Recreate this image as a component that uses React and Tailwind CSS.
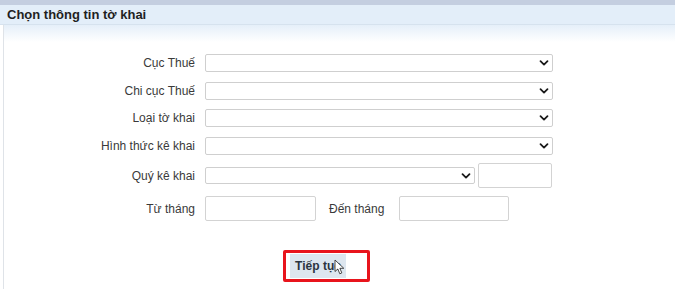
import React from 'react';

function Chevron() {
  return (
    <svg className="absolute right-[4px] top-1/2 -translate-y-1/2 w-[10px] h-[10px] pointer-events-none" viewBox="0 0 10 10" fill="none">
      <path d="M1.5 3.2 L5 6.6 L8.5 3.2" stroke="#1a1a1a" strokeWidth="1.8" strokeLinecap="round" strokeLinejoin="round" />
    </svg>
  );
}

function SelectBox({ width, height = 'h-[18px]' }) {
  return (
    <div className={`relative ${width} ${height}`}>
      <select className="appearance-none w-full h-full border border-[#cfcfcf] bg-white rounded-[2px] outline-none">
        <option value=""></option>
      </select>
      <Chevron />
    </div>
  );
}

function Row({ label, children, className = '' }) {
  return (
    <div className={`flex items-center ${className}`}>
      <label className="w-[196px] pr-[1px] text-right text-[12px] text-[#3a3a3a]">{label}</label>
      <div className="ml-[9px] flex items-center">{children}</div>
    </div>
  );
}

export default function App() {
  return (
    <div className="w-[675px] h-[289px] bg-white overflow-hidden" style={{ fontFamily: '"Liberation Sans", Arial, sans-serif' }}>
      <div className="h-[5px] bg-[#c4cee0]" />
      <div className="h-[20px] bg-[#e3eef9] flex items-center pl-[7px] border-b border-[#d6e2ee]">
        <span className="text-[13px] text-[#1f1f1f] font-semibold">Chọn thông tin tờ khai</span>
      </div>
      <div className="ml-[3px] border-l border-[#dfe3e8] h-[264px]">
        <div className="h-[17px] bg-gradient-to-b from-[#e5eff9] to-white" />
        <div className="pt-[12px] -ml-[4px]">
          <Row label="Cục Thuế" className="h-[18px]">
            <SelectBox width="w-[348px]" />
          </Row>
          <Row label="Chi cục Thuế" className="h-[18px] mt-[10px]">
            <SelectBox width="w-[348px]" />
          </Row>
          <Row label="Loại tờ khai" className="h-[18px] mt-[9px]">
            <SelectBox width="w-[348px]" />
          </Row>
          <Row label="Hình thức kê khai" className="h-[18px] mt-[10px]">
            <SelectBox width="w-[348px]" />
          </Row>
          <Row label="Quý kê khai" className="h-[25px] mt-[8px]">
            <SelectBox width="w-[270px]" height="h-[17px]" />
            <input className="ml-[3px] w-[74px] h-[25px] border border-[#d3d3d3] rounded-[2px] outline-none" />
          </Row>
          <Row label="Từ tháng" className="h-[25px] mt-[8px]">
            <input className="w-[111px] h-[25px] border border-[#d3d3d3] rounded-[2px] outline-none" />
            <span className="ml-[13px] text-[12px] text-[#3a3a3a]">Đến tháng</span>
            <input className="ml-[15px] w-[110px] h-[25px] border border-[#d3d3d3] rounded-[2px] outline-none" />
          </Row>
          <div className="mt-[29px] ml-[283px] w-[87px] h-[32px] border-[3px] border-[#e8141c] rounded-[2px] flex items-center pl-[4px]">
            <div className="relative w-[56px] h-[24px] bg-[#dde6ef] flex items-center justify-center">
              <span className="text-[12px] font-semibold text-[#2b3440]">Tiếp tục</span>
              <svg className="absolute left-[44px] top-[5px] w-[12px] h-[17px]" viewBox="0 0 12 17">
                <path d="M1 1 L1 12.5 L3.8 10 L5.8 14.8 L7.8 13.9 L5.9 9.3 L9.8 9.3 Z" fill="#fff" stroke="#333" strokeWidth="0.9" strokeLinejoin="round" />
              </svg>
            </div>
          </div>
        </div>
      </div>
    </div>
  );
}
